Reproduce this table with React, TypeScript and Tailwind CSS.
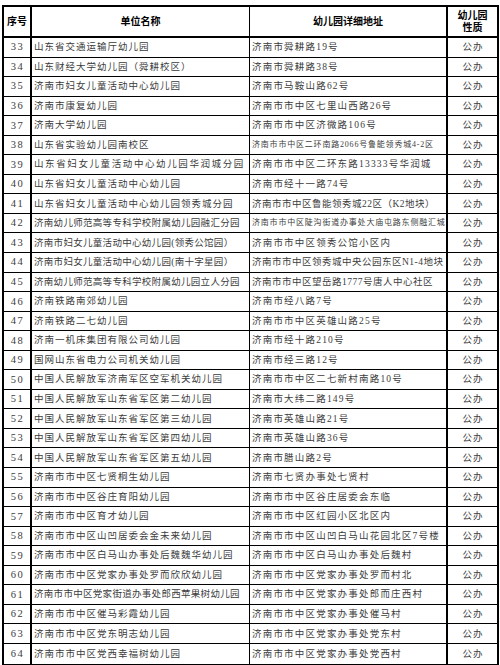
import React from "react";

type Row = {
  no: number;
  name: string;
  addr: string;
  tightName?: boolean;
  wideName?: boolean;
  smallAddr?: boolean;
  tightAddr?: boolean;
};

const rows: Row[] = [
  { no: 33, name: "山东省交通运输厅幼儿园", addr: "济南市舜耕路19号" },
  { no: 34, name: "山东财经大学幼儿园（舜耕校区）", addr: "济南市舜耕路38号" },
  { no: 35, name: "济南市妇女儿童活动中心幼儿园", addr: "济南市马鞍山路62号" },
  { no: 36, name: "济南市康复幼儿园", addr: "济南市市中区七里山西路26号" },
  { no: 37, name: "济南大学幼儿园", addr: "济南市市中区济微路106号" },
  { no: 38, name: "山东省实验幼儿园南校区", addr: "济南市市中区二环南路2066号鲁能领秀城4-2区", smallAddr: true },
  { no: 39, name: "山东省妇女儿童活动中心幼儿园华润城分园", addr: "济南市市中区二环东路13333号华润城", wideName: true },
  { no: 40, name: "山东省妇女儿童活动中心幼儿园", addr: "济南市经十一路74号" },
  { no: 41, name: "山东省妇女儿童活动中心幼儿园领秀城分园", addr: "济南市市中区鲁能领秀城22区（K2地块）", tightAddr: true },
  { no: 42, name: "济南幼儿师范高等专科学校附属幼儿园融汇分园", addr: "济南市市中区陡沟街道办事处大庙屯路东侧融汇城", tightName: true, smallAddr: true },
  { no: 43, name: "济南市妇女儿童活动中心幼儿园(领秀公馆园）", addr: "济南市市中区领秀公馆小区内", tightName: true },
  { no: 44, name: "济南市妇女儿童活动中心幼儿园(南十字星园）", addr: "济南市市中区领秀城中央公园东区N1-4地块", tightName: true, tightAddr: true },
  { no: 45, name: "济南幼儿师范高等专科学校附属幼儿园立人分园", addr: "济南市市中区望岳路1777号唐人中心社区", tightName: true, tightAddr: true },
  { no: 46, name: "济南铁路南郊幼儿园", addr: "济南市经八路7号" },
  { no: 47, name: "济南铁路二七幼儿园", addr: "济南市市中区英雄山路25号" },
  { no: 48, name: "济南一机床集团有限公司幼儿园", addr: "济南市经十路210号" },
  { no: 49, name: "国网山东省电力公司机关幼儿园", addr: "济南市经三路12号" },
  { no: 50, name: "中国人民解放军济南军区空军机关幼儿园", addr: "济南市市中区二七新村南路10号" },
  { no: 51, name: "中国人民解放军山东省军区第二幼儿园", addr: "济南市大纬二路149号" },
  { no: 52, name: "中国人民解放军山东省军区第三幼儿园", addr: "济南市英雄山路21号" },
  { no: 53, name: "中国人民解放军山东省军区第四幼儿园", addr: "济南市英雄山路36号" },
  { no: 54, name: "中国人民解放军山东省军区第五幼儿园", addr: "济南市腊山路2号" },
  { no: 55, name: "济南市市中区七贤桐生幼儿园", addr: "济南市七贤办事处七贤村" },
  { no: 56, name: "济南市市中区谷庄育阳幼儿园", addr: "济南市市中区谷庄居委会东临" },
  { no: 57, name: "济南市市中区育才幼儿园", addr: "济南市市中区红园小区北区内" },
  { no: 58, name: "济南市市中区山凹居委会金未来幼儿园", addr: "济南市市中区山凹白马山花园北区7号楼" },
  { no: 59, name: "济南市市中区白马山办事处后魏魏华幼儿园", addr: "济南市市中区白马山办事处后魏村" },
  { no: 60, name: "济南市市中区党家办事处罗而欣欣幼儿园", addr: "济南市市中区党家办事处罗而村北" },
  { no: 61, name: "济南市市中区党家街道办事处郎西苹果树幼儿园", addr: "济南市市中区党家办事处郎而庄西村", tightName: true },
  { no: 62, name: "济南市市中区催马彩霞幼儿园", addr: "济南市市中区党家办事处催马村" },
  { no: 63, name: "济南市市中区党东明志幼儿园", addr: "济南市市中区党家办事处党东村" },
  { no: 64, name: "济南市市中区党西幸福树幼儿园", addr: "济南市市中区党家办事处党西村" },
];

const font = "font-['Liberation_Serif','Noto_Sans_CJK_SC',serif]";

function addrClass(r: Row) {
  if (r.smallAddr) return "text-[8px] tracking-[0.8px]";
  if (r.tightAddr) return "text-[9.5px] tracking-[0.5px]";
  return "text-[9.5px] tracking-[1.2px]";
}

function nameClass(r: Row) {
  if (r.tightName) return "tracking-[0.3px]";
  if (r.wideName) return "tracking-[1.6px]";
  return "tracking-[1px]";
}

export default function App() {
  return (
    <div className={`w-[500px] h-[665px] bg-white pt-[5px] pl-[2px] ${font}`}>
      <div className="w-[497px] border-2 border-black grid grid-cols-[28px_218px_198px_49px] grid-rows-[31px_repeat(32,19.55px)] text-[#3c3c3c]">
        {/* header */}
        <div className="border-r-2 border-b-2 border-black flex items-center justify-center text-[10px] font-bold text-black">
          序号
        </div>
        <div className="border-r border-b-2 border-black flex items-center justify-center text-[10px] font-bold text-black">
          单位名称
        </div>
        <div className="border-r-2 border-b-2 border-black flex items-center justify-center text-[10px] font-bold text-black">
          幼儿园详细地址
        </div>
        <div className="border-b-2 border-black flex flex-col items-center justify-center text-[10px] leading-[12px] font-bold text-black">
          <span>幼儿园</span>
          <span>性质</span>
        </div>

        {rows.map((r, i) => {
          const last = i === rows.length - 1;
          const bb = last ? "" : "border-b border-black";
          return (
            <React.Fragment key={r.no}>
              <div className={`border-r-2 border-black ${bb} flex items-center justify-center text-[10.5px] tracking-[1.5px] pl-[1px]`}>
                {r.no}
              </div>
              <div className={`border-r border-black ${bb} flex items-center pl-[2px] whitespace-nowrap overflow-hidden text-[9.5px] ${nameClass(r)}`}>
                {r.name}
              </div>
              <div className={`border-r-2 border-black ${bb} flex items-center pl-[2px] whitespace-nowrap overflow-hidden ${addrClass(r)}`}>
                {r.addr}
              </div>
              <div className={`${bb} flex items-center justify-center text-[9.5px] tracking-[1px] pl-[1px]`}>
                公办
              </div>
            </React.Fragment>
          );
        })}
      </div>
    </div>
  );
}
